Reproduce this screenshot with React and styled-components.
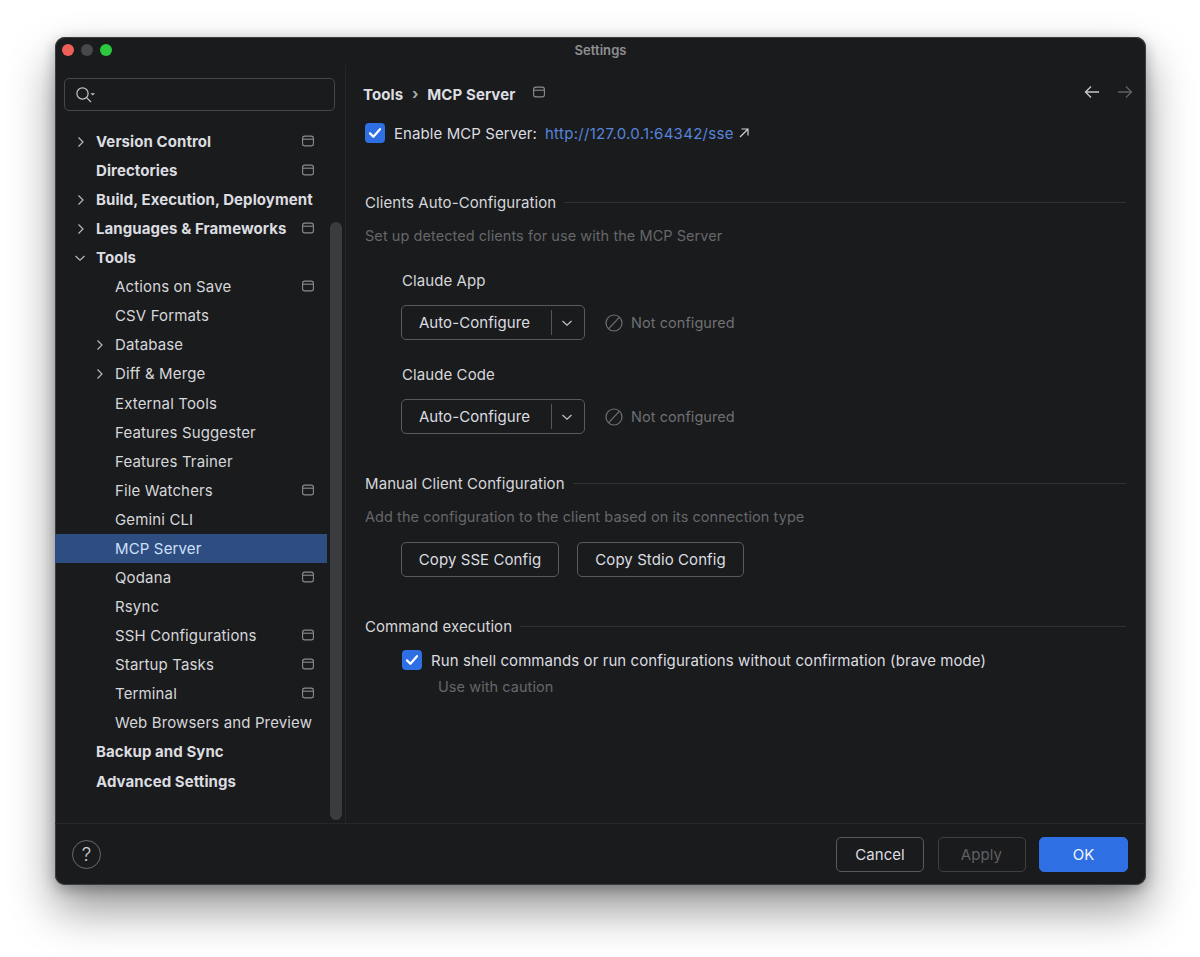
import React from 'react';
import styled, { createGlobalStyle } from 'styled-components';

const GlobalStyle = createGlobalStyle`
  html, body { margin: 0; padding: 0; background: #fff; }
  body { font-family: Inter, "Noto Sans", sans-serif; }
  * { box-sizing: border-box; }
`;

const Page = styled.div`
  width: 1200px;
  height: 957px;
  padding: 37px 54px 0 55px;
  background: #fff;
  overflow: hidden;
`;

const Window = styled.div`
  width: 1091px;
  height: 848px;
  display: flex;
  flex-direction: column;
  background: #1a1b1d;
  border-radius: 10px;
  box-shadow: inset 0 0 0 1px #3c3d3f, 0 24px 46px rgba(0, 0, 0, 0.42), 0 4px 14px rgba(0, 0, 0, 0.28);
  color: #dfe1e5;
  font-size: 15px;
  line-height: 24px;
  letter-spacing: 0.08px;
`;

const TitleBar = styled.div`
  position: relative;
  height: 28px;
  flex: none;
  display: flex;
  align-items: center;
  justify-content: center;
  padding-bottom: 2px;
  font-size: 13px;
  font-weight: 600;
  color: #8f9093;
`;

const Lights = styled.div`
  position: absolute;
  left: 7px;
  top: 7px;
  display: flex;
  gap: 7px;
`;

const Light = styled.span`
  width: 12px;
  height: 12px;
  border-radius: 50%;
  background: ${(p) => p.$color};
`;

const Body = styled.div`
  flex: 1;
  min-height: 0;
  display: flex;
`;

const Sidebar = styled.aside`
  position: relative;
  width: 291px;
  flex: none;
  border-right: 1px solid #26272a;
`;

const SearchBox = styled.div`
  width: 271px;
  height: 33px;
  margin: 13px 0 16.3px 9px;
  padding-left: 10px;
  display: flex;
  align-items: center;
  border: 1px solid #46474a;
  border-radius: 5px;
  color: #c4c5c8;
`;

const Tree = styled.nav`
  width: 272px;
`;

const Row = styled.div`
  height: 29.08px;
  display: flex;
  align-items: center;
  padding-left: ${(p) => 22 + p.$level * 19}px;
  font-weight: ${(p) => (p.$level === 0 ? 700 : 400)};
  color: ${(p) => (p.$selected ? '#cfe0fb' : p.$level === 0 ? '#dcdde0' : '#d6d7da')};
  background: ${(p) => (p.$selected ? '#2e4d80' : 'transparent')};
  white-space: nowrap;
  letter-spacing: ${(p) => (p.$level === 0 ? 0.08 : 0.14)}px;
`;

const ArrowSlot = styled.span`
  width: 19px;
  flex: none;
  display: flex;
  align-items: center;
  margin-left: -1px;
  margin-right: 1px;
  color: #b9babd;
`;

const RowBadge = styled.span`
  margin-left: auto;
  margin-right: 13px;
  margin-top: -2px;
  display: flex;
  color: #8b8c8f;
`;

const ScrollThumb = styled.div`
  position: absolute;
  top: 157px;
  right: 3px;
  width: 12px;
  height: 598px;
  border-radius: 6px;
  background: #3b3c3f;
`;

const Main = styled.main`
  flex: 1;
  min-width: 0;
  padding: 15px 20px 0 18px;
`;

const Header = styled.div`
  height: 26px;
  display: flex;
  align-items: center;
  margin-left: -1px;
  font-weight: 700;
  color: #dcdde0;
`;

const Crumb = styled.span`
  padding-top: 3px;
  letter-spacing: 0.1px;
`;

const CrumbSep = styled.span`
  width: 24px;
  padding-top: 1px;
  display: flex;
  justify-content: center;
  color: #a9aaad;
`;

const HeaderBadge = styled.span`
  margin-left: 18px;
  margin-top: -2px;
  display: flex;
  color: #8b8c8f;
`;

const NavArrows = styled.div`
  margin-left: auto;
  margin-right: -7px;
  margin-top: -3px;
  display: flex;
  gap: 17px;
`;

const CheckRow = styled.div`
  height: 24px;
  display: flex;
  align-items: center;
  margin-top: ${(p) => p.$top}px;
  margin-left: ${(p) => p.$left}px;
  color: #dcdde0;
`;

const CheckLabel = styled.span`
  padding-top: 1px;
  white-space: nowrap;
`;

const CheckBox = styled.span`
  width: 20px;
  height: 20px;
  flex: none;
  margin-right: ${(p) => p.$gap}px;
  display: flex;
  align-items: center;
  justify-content: center;
  border-radius: 4px;
  background: #2f6fe4;
`;

const Link = styled.a`
  margin-left: 8px;
  padding-top: 1px;
  color: #5784dc;
  letter-spacing: 0.3px;
`;

const ExternalMark = styled.span`
  margin-left: 5px;
  display: flex;
  color: #d0d1d4;
`;

const SectionTitle = styled.div`
  height: 24px;
  padding-top: 1px;
  display: flex;
  align-items: center;
  gap: 8px;
  margin-top: ${(p) => p.$top}px;
  margin-left: 1px;
  color: #d6d7da;
  white-space: nowrap;
  &::after {
    content: '';
    flex: 1;
    height: 1px;
    margin-top: -1px;
    background: #303134;
  }
`;

const Hint = styled.div`
  height: 24px;
  margin-top: ${(p) => p.$top}px;
  margin-left: ${(p) => p.$left}px;
  font-size: 14.5px;
  letter-spacing: 0.06px;
  color: #66676a;
`;

const ClientLabel = styled.div`
  height: 24px;
  padding-top: 1px;
  margin-top: ${(p) => p.$top}px;
  margin-left: 38px;
  color: #d6d7da;
`;

const ClientRow = styled.div`
  height: 35px;
  margin-top: 13px;
  margin-left: 37px;
  display: flex;
  align-items: center;
`;

const Combo = styled.div`
  width: 184px;
  height: 35px;
  display: flex;
  align-items: center;
  border: 1px solid #5a5b5e;
  border-radius: 5px;
`;

const ComboLabel = styled.span`
  width: 150px;
  height: 25px;
  padding-right: 4px;
  display: flex;
  align-items: center;
  justify-content: center;
  border-right: 1px solid #55565a;
  color: #dcdde0;
`;

const ComboArrow = styled.span`
  flex: 1;
  padding-right: 1px;
  display: flex;
  justify-content: center;
  color: #c4c5c8;
`;

const Status = styled.div`
  margin-left: 20px;
  display: flex;
  align-items: center;
  gap: 8px;
  font-size: 14.5px;
  letter-spacing: 0.06px;
  color: #6f7073;
`;

const ButtonRow = styled.div`
  display: flex;
  gap: 18px;
  margin-top: 13px;
  margin-left: 37px;
`;

const Button = styled.button`
  height: 35px;
  width: ${(p) => p.$width}px;
  padding: 0;
  font: inherit;
  letter-spacing: inherit;
  border-radius: 5px;
  border: 1px solid ${(p) => (p.$primary ? '#2f6fe4' : p.$disabled ? '#3f4043' : '#5a5b5e')};
  background: ${(p) => (p.$primary ? '#2f6fe4' : 'transparent')};
  color: ${(p) => (p.$primary ? '#f2f6ff' : p.$disabled ? '#5f6063' : '#dcdde0')};
`;

const Footer = styled.footer`
  height: 62px;
  flex: none;
  display: flex;
  align-items: center;
  gap: 13.5px;
  padding: 0 18px 0 17px;
  border-top: 1px solid #26272a;
`;

const HelpButton = styled.span`
  width: 29px;
  height: 29px;
  margin-right: auto;
  display: flex;
  align-items: center;
  justify-content: center;
  border: 1px solid #6a6b6e;
  border-radius: 50%;
  font-size: 19px;
  font-weight: 300;
  color: #cfd0d3;
`;

const ProjectIcon = () => (
  <svg width="12" height="12" viewBox="0 0 12 12" fill="none" stroke="currentColor" strokeWidth="1.1">
    <rect x="0.6" y="1.1" width="10.8" height="9.8" rx="2.2" />
    <path d="M0.6 4.2H11.4" />
  </svg>
);

const Chevron = ({ open }) => (
  <svg width="10" height="10" viewBox="0 0 10 10" fill="none" stroke="currentColor" strokeWidth="1.2" style={{ marginLeft: open ? -1 : 0 }}>
    <path d={open ? 'M0.5 3L5 7.2L9.5 3' : 'M2.5 0.5L7 5L2.5 9.5'} />
  </svg>
);

const SearchIcon = () => (
  <svg width="22" height="18" viewBox="0 0 22 18" fill="none" stroke="currentColor" strokeWidth="1.2">
    <circle cx="7.5" cy="7.5" r="5.6" />
    <path d="M11.6 11.6L16 16" />
    <path d="M15.5 7.2H20L17.75 9.6Z" fill="currentColor" stroke="none" />
  </svg>
);

const CheckMark = () => (
  <svg width="14" height="12" viewBox="0 0 14 12" fill="none" stroke="#fff" strokeWidth="2.2" strokeLinecap="round" strokeLinejoin="round">
    <path d="M2 6.4L5.4 9.8L12 2.2" />
  </svg>
);

const ArrowIcon = ({ dir, color }) => (
  <svg width="16" height="14" viewBox="0 0 16 14" fill="none" stroke={color} strokeWidth="1.4">
    <path d={dir === 'left' ? 'M15 7H1.5M7 1.5L1.5 7L7 12.5' : 'M1 7H14.5M9 1.5L14.5 7L9 12.5'} />
  </svg>
);

const ExternalIcon = () => (
  <svg width="10" height="10" viewBox="0 0 10 10" fill="none" stroke="currentColor" strokeWidth="1.2">
    <path d="M1 9L9 1M2.5 1H9V7.5" />
  </svg>
);

const BlockedIcon = () => (
  <svg width="18" height="18" viewBox="0 0 18 18" fill="none" stroke="currentColor" strokeWidth="1.2">
    <circle cx="9" cy="9" r="8" />
    <path d="M3.5 14.8L14.5 3.2" />
  </svg>
);

const treeItems = [
  { label: 'Version Control', level: 0, arrow: 'closed', badge: true },
  { label: 'Directories', level: 0, badge: true },
  { label: 'Build, Execution, Deployment', level: 0, arrow: 'closed' },
  { label: 'Languages & Frameworks', level: 0, arrow: 'closed', badge: true },
  { label: 'Tools', level: 0, arrow: 'open' },
  { label: 'Actions on Save', level: 1, badge: true },
  { label: 'CSV Formats', level: 1 },
  { label: 'Database', level: 1, arrow: 'closed' },
  { label: 'Diff & Merge', level: 1, arrow: 'closed' },
  { label: 'External Tools', level: 1 },
  { label: 'Features Suggester', level: 1 },
  { label: 'Features Trainer', level: 1 },
  { label: 'File Watchers', level: 1, badge: true },
  { label: 'Gemini CLI', level: 1 },
  { label: 'MCP Server', level: 1, selected: true },
  { label: 'Qodana', level: 1, badge: true },
  { label: 'Rsync', level: 1 },
  { label: 'SSH Configurations', level: 1, badge: true },
  { label: 'Startup Tasks', level: 1, badge: true },
  { label: 'Terminal', level: 1, badge: true },
  { label: 'Web Browsers and Preview', level: 1 },
  { label: 'Backup and Sync', level: 0 },
  { label: 'Advanced Settings', level: 0 },
];

const ClientConfig = () => (
  <ClientRow>
    <Combo>
      <ComboLabel>Auto-Configure</ComboLabel>
      <ComboArrow><Chevron open /></ComboArrow>
    </Combo>
    <Status>
      <BlockedIcon />
      Not configured
    </Status>
  </ClientRow>
);

const App = () => (
  <Page>
    <GlobalStyle />
    <Window>
      <TitleBar>
        <Lights>
          <Light $color="#ee5f57" />
          <Light $color="#47484a" />
          <Light $color="#2bc840" />
        </Lights>
        Settings
      </TitleBar>
      <Body>
        <Sidebar>
          <SearchBox><SearchIcon /></SearchBox>
          <Tree>
            {treeItems.map((item) => (
              <Row key={item.label} $level={item.level} $selected={item.selected}>
                <ArrowSlot>{item.arrow && <Chevron open={item.arrow === 'open'} />}</ArrowSlot>
                {item.label}
                {item.badge && <RowBadge><ProjectIcon /></RowBadge>}
              </Row>
            ))}
          </Tree>
          <ScrollThumb />
        </Sidebar>
        <Main>
          <Header>
            <Crumb>Tools</Crumb>
            <CrumbSep>›</CrumbSep>
            <Crumb>MCP Server</Crumb>
            <HeaderBadge><ProjectIcon /></HeaderBadge>
            <NavArrows>
              <ArrowIcon dir="left" color="#c4c5c8" />
              <ArrowIcon dir="right" color="#5f6063" />
            </NavArrows>
          </Header>

          <CheckRow $top={15} $left={1}>
            <CheckBox $gap={9}><CheckMark /></CheckBox>
            <CheckLabel>Enable MCP Server:</CheckLabel>
            <Link>http://127.0.0.1:64342/sse</Link>
            <ExternalMark><ExternalIcon /></ExternalMark>
          </CheckRow>

          <SectionTitle $top={45}>Clients Auto-Configuration</SectionTitle>
          <Hint $top={10} $left={1}>Set up detected clients for use with the MCP Server</Hint>
          <ClientLabel $top={20}>Claude App</ClientLabel>
          <ClientConfig />
          <ClientLabel $top={22}>Claude Code</ClientLabel>
          <ClientConfig />

          <SectionTitle $top={37}>Manual Client Configuration</SectionTitle>
          <Hint $top={10} $left={1}>Add the configuration to the client based on its connection type</Hint>
          <ButtonRow>
            <Button $width={158}>Copy SSE Config</Button>
            <Button $width={167}>Copy Stdio Config</Button>
          </ButtonRow>

          <SectionTitle $top={37}>Command execution</SectionTitle>
          <CheckRow $top={10} $left={38}>
            <CheckBox $gap={9}><CheckMark /></CheckBox>
            <CheckLabel>Run shell commands or run configurations without confirmation (brave mode)</CheckLabel>
          </CheckRow>
          <Hint $top={3} $left={74}>Use with caution</Hint>
        </Main>
      </Body>
      <Footer>
        <HelpButton>?</HelpButton>
        <Button $width={88}>Cancel</Button>
        <Button $width={88} $disabled>Apply</Button>
        <Button $width={89} $primary>OK</Button>
      </Footer>
    </Window>
  </Page>
);

export default App;
